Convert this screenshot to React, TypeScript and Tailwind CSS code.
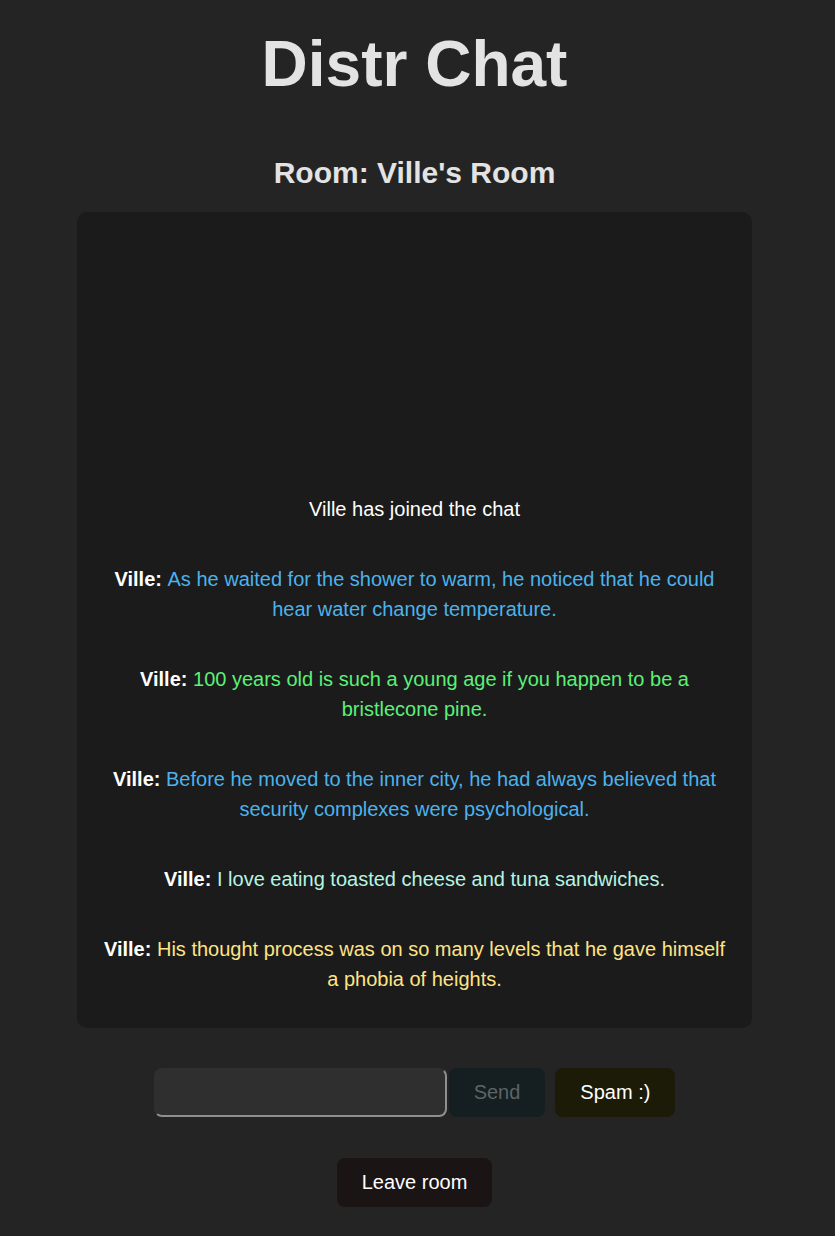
import { useState } from "react";

type Msg = { user?: string; text: string; color: string };

const MESSAGES: Msg[] = [
  { text: "Ville has joined the chat", color: "text-white" },
  {
    user: "Ville",
    text: "As he waited for the shower to warm, he noticed that he could hear water change temperature.",
    color: "text-[#4cb2ec]",
  },
  {
    user: "Ville",
    text: "100 years old is such a young age if you happen to be a bristlecone pine.",
    color: "text-[#5cf078]",
  },
  {
    user: "Ville",
    text: "Before he moved to the inner city, he had always believed that security complexes were psychological.",
    color: "text-[#4cb2ec]",
  },
  {
    user: "Ville",
    text: "I love eating toasted cheese and tuna sandwiches.",
    color: "text-[#b6f4e2]",
  },
  {
    user: "Ville",
    text: "His thought process was on so many levels that he gave himself a phobia of heights.",
    color: "text-[#ffe384]",
  },
];

const App = () => {
  const [message, setMessage] = useState("");

  return (
    <div className="min-h-screen bg-[#242424] font-['Liberation_Sans',Arial,sans-serif] text-[20px] text-[#e3e3e3]">
      <div className="w-[829px] flex flex-col items-center">
        <h1 className="mt-[28px] text-[64px] font-bold leading-[1.15]">Distr Chat</h1>

        <h2 className="mt-[54px] text-[30px] font-bold leading-[1.15]">Room: Ville's Room</h2>

        {/* Chat window */}
        <div className="mt-[22px] w-[675px] h-[816px] bg-[#1b1b1b] rounded-[10px] px-6 pb-[34px] flex flex-col justify-end gap-10 text-center leading-[30px]">
          {MESSAGES.map((m, idx) => (
            <p key={idx} className={m.color}>
              {m.user && <b className="text-white">{m.user}: </b>}
              {m.text}
            </p>
          ))}
        </div>

        {/* Input row */}
        <div className="mt-[40px] flex items-start">
          <input
            type="text"
            value={message}
            onChange={(e) => setMessage(e.target.value)}
            className="w-[293px] h-[49px] bg-[#2f2f2f] rounded-lg border-2 border-t-[#2f2f2f] border-l-[#2f2f2f] border-b-[#8f8f8f] border-r-[#8f8f8f] px-2 text-white outline-none"
          />
          <button
            disabled={!message}
            className="ml-[2px] px-6 py-3 leading-[1.15] rounded-lg border border-transparent bg-[#151e21] text-[#5b6467]"
          >
            Send
          </button>
          <button className="ml-[10px] px-6 py-3 leading-[1.15] rounded-lg border border-transparent bg-[#1c1b08] text-white">
            Spam :)
          </button>
        </div>

        <button className="mt-[41px] px-6 py-3 leading-[1.15] rounded-lg border border-transparent bg-[#1b1414] text-white">
          Leave room
        </button>
      </div>
    </div>
  );
};

export default App;
